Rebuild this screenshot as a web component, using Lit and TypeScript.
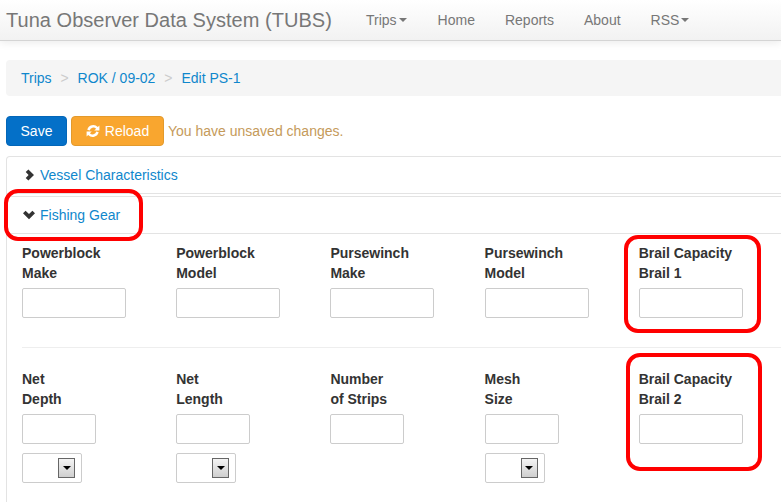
import { LitElement, html, css, svg } from 'lit';
import { customElement } from 'lit/decorators.js';

const rowOne = [
  ['Powerblock', 'Make'],
  ['Powerblock', 'Model'],
  ['Pursewinch', 'Make'],
  ['Pursewinch', 'Model'],
  ['Brail Capacity', 'Brail 1'],
];

const rowTwo = [
  { lines: ['Net', 'Depth'], unit: true },
  { lines: ['Net', 'Length'], unit: true },
  { lines: ['Number', 'of Strips'], unit: false },
  { lines: ['Mesh', 'Size'], unit: true },
  { lines: ['Brail Capacity', 'Brail 2'], unit: false, wide: true },
];

const refreshIcon = svg`<path d="M13.4 1.400v5.200H8.200l1.900-1.900A3.800 3.800 0 0 0 3.700 6.400L1.300 5.700a6.200 6.200 0 0 1 10.500-2.700zM.6 12.600V7.400h5.200L3.900 9.300a3.800 3.800 0 0 0 6.400-1.700l2.400.7a6.200 6.200 0 0 1-10.500 2.700z" fill="currentColor"/>`;

@customElement('app-root')
export class AppRoot extends LitElement {
  static styles = css`
    :host {
      display: block;
      position: relative;
      width: 781px;
      height: 502px;
      overflow: hidden;
      background: #fff;
      font-family: 'Liberation Sans', Arial, sans-serif;
      font-size: 14px;
      line-height: 20px;
      color: #333;
    }
    .navbar {
      display: flex;
      align-items: center;
      height: 40px;
      padding-left: 6px;
      background: linear-gradient(to bottom, #fff, #f2f2f2);
      border-bottom: 1px solid #d4d4d4;
      box-shadow: 0 2px 8px rgba(0, 0, 0, 0.08);
      color: #777;
    }
    .brand {
      width: 345px;
      font-size: 20px;
      letter-spacing: 0.03px;
      color: #777;
    }
    .nav {
      display: flex;
    }
    .nav span {
      display: inline-flex;
      align-items: center;
      padding: 0 15px;
    }
    .caret {
      width: 0;
      height: 0;
      margin: 0 1px 0 2px;
      border-top: 4px solid #777;
      border-left: 4px solid transparent;
      border-right: 4px solid transparent;
    }
    .crumbs {
      display: flex;
      align-items: center;
      height: 36px;
      margin: 19px 0 20px 6px;
      padding-left: 15px;
      background: #f5f5f5;
      border-radius: 4px 0 0 4px;
      color: #0f87cc;
    }
    .crumbs i {
      width: 26px;
      text-align: center;
      font-style: normal;
      color: #ccc;
    }
    .toolbar {
      display: flex;
      align-items: center;
      height: 30px;
      margin-left: 6px;
    }
    .btn {
      display: inline-flex;
      align-items: center;
      justify-content: center;
      box-sizing: border-box;
      height: 30px;
      border-radius: 4px;
      color: #fff;
    }
    .save {
      width: 61px;
      background: #0470c8;
      border: 1px solid #0366b8;
    }
    .reload {
      width: 93px;
      margin: 0 4px;
      gap: 5px;
      background: #f9a62f;
      border: 1px solid #e39a2c;
    }
    .reload svg {
      width: 14px;
      height: 14px;
    }
    .warn {
      color: #c59a5a;
    }
    .panel {
      width: 800px;
      height: 360px;
      margin: 10px 0 0 6px;
      border: 1px solid #e3e3e3;
      border-bottom: 0;
      border-radius: 4px 0 0 0;
    }
    .head {
      display: flex;
      align-items: center;
      gap: 4px;
      height: 36px;
      padding-left: 17px;
      border-bottom: 1px solid #e3e3e3;
      color: #0f87cc;
    }
    .head svg {
      width: 12px;
      height: 12px;
      fill: #333;
    }
    .head + .head {
      gap: 5px;
      margin-top: 2px;
      padding-left: 16px;
      border-top: 1px solid #e3e3e3;
    }
    .body {
      padding: 9px 0 0 15px;
    }
    .row {
      display: grid;
      grid-template-columns: repeat(5, 154.2px);
    }
    .row + .row {
      margin-top: 29px;
      padding-top: 21px;
      border-top: 1px solid #eee;
    }
    .field label {
      display: block;
      height: 40px;
      margin-bottom: 5px;
      font-weight: 700;
    }
    .field label span {
      display: block;
    }
    .input {
      box-sizing: border-box;
      width: 104px;
      height: 30px;
      border: 1px solid #ccc;
      border-radius: 2px;
      background: #fff;
    }
    .input.small {
      width: 74px;
    }
    .select {
      display: flex;
      align-items: center;
      justify-content: flex-end;
      box-sizing: border-box;
      width: 60px;
      height: 30px;
      margin-top: 9px;
      padding-right: 6px;
      border: 1px solid #ccc;
      border-radius: 2px;
    }
    .arrow {
      display: flex;
      align-items: center;
      justify-content: center;
      box-sizing: border-box;
      width: 17px;
      height: 20px;
      border: 1px solid #666;
      background: linear-gradient(to bottom, #f4f4f4, #cfcfcf);
    }
    .arrow::after {
      content: '';
      border-top: 4px solid #000;
      border-left: 4px solid transparent;
      border-right: 4px solid transparent;
    }
    .mark {
      position: absolute;
      box-sizing: border-box;
      border: 4px solid #f00;
      border-radius: 14px;
      pointer-events: none;
    }
    .mark.gear {
      left: 3.5px;
      top: 188.5px;
      width: 139.5px;
      height: 52.5px;
    }
    .mark.brail1 {
      left: 623.5px;
      top: 234.5px;
      width: 137.5px;
      height: 98.5px;
    }
    .mark.brail2 {
      left: 625.5px;
      top: 352.5px;
      width: 136px;
      height: 118px;
    }
  `;

  private renderLabel(lines: string[]) {
    return html`<label>${lines.map((l) => html`<span>${l}</span>`)}</label>`;
  }

  render() {
    return html`
      <header class="navbar">
        <div class="brand">Tuna Observer Data System (TUBS)</div>
        <nav class="nav">
          <span>Trips<b class="caret"></b></span>
          <span>Home</span>
          <span>Reports</span>
          <span>About</span>
          <span>RSS<b class="caret"></b></span>
        </nav>
      </header>

      <div class="crumbs">Trips<i>&gt;</i>ROK / 09-02<i>&gt;</i>Edit PS-1</div>

      <div class="toolbar">
        <div class="btn save">Save</div>
        <div class="btn reload">
          <svg viewBox="0 0 14 14">${refreshIcon}</svg>
          Reload
        </div>
        <span class="warn">You have unsaved changes.</span>
      </div>

      <section class="panel">
        <div class="head">
          <svg viewBox="0 0 12 12"><path d="M4.400 .4L10 6 4.400 11.600 1.700 8.900 4.600 6 1.700 3.100z" /></svg>
          Vessel Characteristics
        </div>
        <div class="head">
          <svg viewBox="0 0 12 12"><path d="M0 4.300L2.600 1.700 6 5.100l3.400-3.400L12 4.300 6 10.300z" /></svg>
          Fishing Gear
        </div>
        <div class="body">
          <div class="row">
            ${rowOne.map(
              (lines) => html`<div class="field">${this.renderLabel(lines)}<div class="input"></div></div>`,
            )}
          </div>
          <div class="row">
            ${rowTwo.map(
              (f) => html`<div class="field">
                ${this.renderLabel(f.lines)}
                <div class="input ${f.wide ? '' : 'small'}"></div>
                ${f.unit ? html`<div class="select"><div class="arrow"></div></div>` : ''}
              </div>`,
            )}
          </div>
        </div>
      </section>

      <div class="mark gear"></div>
      <div class="mark brail1"></div>
      <div class="mark brail2"></div>
    `;
  }
}
